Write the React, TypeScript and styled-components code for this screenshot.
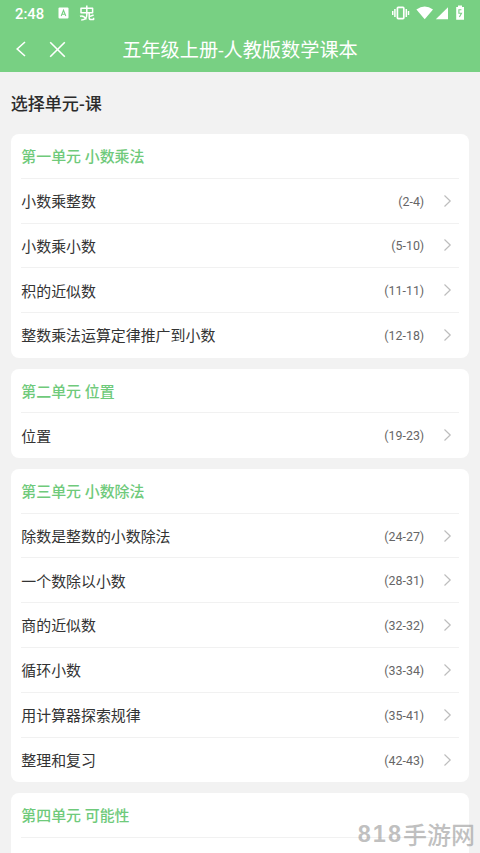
import React from "react";
import styled, { createGlobalStyle } from "styled-components";

const GlobalStyle = createGlobalStyle`
  * { box-sizing: border-box; }
  html, body { margin: 0; padding: 0; overflow: hidden; background: #f2f2f2; }
`;

const Screen = styled.div`
  position: relative;
  width: 480px;
  height: 853px;
  overflow: hidden;
  background: #f2f2f2;
  font-family: Roboto, "Noto Sans CJK SC", sans-serif;
  color: #333;
`;

const Header = styled.header`
  height: 72px;
  background: #78d083;
  color: #fff;
`;

const StatusBar = styled.div`
  height: 26px;
  display: flex;
  justify-content: space-between;
  padding: 0 15px;
`;

const StatusGroup = styled.div`
  display: flex;
  align-items: center;
`;

const Clock = styled.span`
  width: 43px;
  font-size: 14.8px;
  font-weight: 500;
  line-height: 26px;
  padding-top: 1px;
`;

const NavBar = styled.div`
  height: 46px;
  display: grid;
  grid-template-columns: 82px 1fr 82px;
  align-items: center;
`;

const NavButtons = styled.div`
  display: flex;
  align-items: center;
  gap: 22px;
  padding: 0 0 2px 15px;
`;

const NavTitle = styled.h1`
  margin: 0;
  padding-top: 2px;
  text-align: center;
  font-size: 19.2px;
  font-weight: 400;
  line-height: 46px;
  white-space: nowrap;
`;

const PageHeading = styled.h2`
  margin: 0;
  padding: 1px 10.7px 0;
  height: 62px;
  line-height: 62px;
  font-size: 17.07px;
  font-weight: 500;
  color: #2b2b2b;
`;

const UnitList = styled.main`
  display: flex;
  flex-direction: column;
  gap: 10.67px;
  padding: 0 10.67px;
`;

const UnitCard = styled.section`
  padding: 0 10.67px;
  border-radius: 8px;
  background: #fff;
`;

const Row = styled.div`
  height: 44.8px;
  display: flex;
  align-items: center;
  font-size: 14.93px;
  border-bottom: 1px solid #f1f1f1;
  &:last-child { border-bottom-color: transparent; }
`;

const UnitTitle = styled.span`
  padding-bottom: 1px;
  font-weight: 500;
  color: #6fca7b;
`;

const LessonName = styled.span`
  flex: 1;
  padding-bottom: 0.5px;
`;

const Pages = styled.span`
  margin-right: 19px;
  padding-top: 1px;
  font-size: 12.4px;
  color: #666;
`;

const Chevron = styled.svg`
  width: 9px;
  height: 14px;
  margin-right: 6.5px;
`;

const Watermark = styled.div`
  position: absolute;
  right: 5px;
  bottom: 4px;
  display: flex;
  align-items: center;
  font: 500 24px/30px "Noto Sans CJK SC", sans-serif;
  color: rgba(150, 150, 150, 0.6);
`;

const WatermarkDigits = styled.span`
  font: 700 23.5px/28px "Liberation Sans", sans-serif;
  letter-spacing: 2px;
`;

interface Unit {
  title: string;
  lessons: [string, string][];
}

const units: Unit[] = [
  {
    title: "第一单元 小数乘法",
    lessons: [
      ["小数乘整数", "(2-4)"],
      ["小数乘小数", "(5-10)"],
      ["积的近似数", "(11-11)"],
      ["整数乘法运算定律推广到小数", "(12-18)"],
    ],
  },
  { title: "第二单元 位置", lessons: [["位置", "(19-23)"]] },
  {
    title: "第三单元 小数除法",
    lessons: [
      ["除数是整数的小数除法", "(24-27)"],
      ["一个数除以小数", "(28-31)"],
      ["商的近似数", "(32-32)"],
      ["循环小数", "(33-34)"],
      ["用计算器探索规律", "(35-41)"],
      ["整理和复习", "(42-43)"],
    ],
  },
  { title: "第四单元 可能性", lessons: [["可能性", "(44-47)"]] },
];

const NotificationIcons = () => (
  <svg width="38" height="18" viewBox="0 0 38 18" fill="none">
    <rect x="0.5" y="3.5" width="10" height="11" rx="1" fill="#fff" />
    <path d="M3.2 12 5.5 6.2 7.8 12M4 10.2h3" stroke="#78d083" strokeWidth="1.1" />
    <path
      d="M23 4.2h11.6v4.6H23zM28.8 1.6v9.2c0 3.2-2 5.2-5.6 5.2M22 12.2c2.6-.9 4.8.6 6.4 3.2M31.2 8.8v4.9c0 1.3.6 1.9 1.8 1.9h2.6v-1.8M35.6 11 31.4 12.6"
      stroke="#fff"
      strokeWidth="1.5"
      strokeLinejoin="round"
    />
  </svg>
);

const SystemIcons = () => (
  <svg width="73" height="18" viewBox="0 0 73 18" fill="none">
    <rect x="5.4" y="3.4" width="6.4" height="11.2" rx="0.8" stroke="#fff" strokeWidth="1.7" />
    <path d="M2.9 5v8M14.3 5v8M.7 7v4M16.5 7v4" stroke="#fff" strokeWidth="1.5" />
    <path d="M24.4 5.6Q32.7-.8 41 5.6L32.7 15.3z" fill="#fff" />
    <path d="M56 3.2v12.1H43.8z" fill="#fff" />
    <path d="M66 1.5h4v1.6h2v12.6h-7.8V3.1H66z" fill="#fff" />
    <path d="M69.4 5.8H66.9v3.4h2.6L67.4 13" stroke="#78d083" strokeWidth="1.1" />
  </svg>
);

const BackIcon = () => (
  <svg width="12" height="18" viewBox="0 0 12 18" fill="none" stroke="#fff" strokeWidth="1.6">
    <path d="M10 2 2.2 9 10 16" />
  </svg>
);

const CloseIcon = () => (
  <svg width="17" height="17" viewBox="0 0 17 17" fill="none" stroke="#fff" strokeWidth="1.6">
    <path d="M1.2 1.2 15.8 15.8M15.8 1.2 1.2 15.8" />
  </svg>
);

export default function App() {
  return (
    <Screen>
      <GlobalStyle />
      <Header>
        <StatusBar>
          <StatusGroup>
            <Clock>2:48</Clock>
            <NotificationIcons />
          </StatusGroup>
          <StatusGroup>
            <SystemIcons />
          </StatusGroup>
        </StatusBar>
        <NavBar>
          <NavButtons>
            <BackIcon />
            <CloseIcon />
          </NavButtons>
          <NavTitle>五年级上册-人教版数学课本</NavTitle>
        </NavBar>
      </Header>
      <PageHeading>选择单元-课</PageHeading>
      <UnitList>
        {units.map((unit) => (
          <UnitCard key={unit.title}>
            <Row>
              <UnitTitle>{unit.title}</UnitTitle>
            </Row>
            {unit.lessons.map(([name, pages]) => (
              <Row key={name}>
                <LessonName>{name}</LessonName>
                <Pages>{pages}</Pages>
                <Chevron viewBox="0 0 9 14" fill="none" stroke="#bdbdbd" strokeWidth="1.2">
                  <path d="M1.5 1.5 7.2 7 1.5 12.5" />
                </Chevron>
              </Row>
            ))}
          </UnitCard>
        ))}
      </UnitList>
      <Watermark>
        <WatermarkDigits>818</WatermarkDigits>
        手游网
      </Watermark>
    </Screen>
  );
}
